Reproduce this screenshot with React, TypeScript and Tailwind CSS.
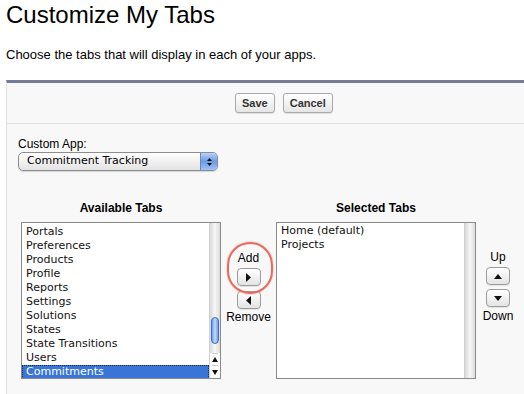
const available = [
  'Opportunities',
  'Portals',
  'Preferences',
  'Products',
  'Profile',
  'Reports',
  'Settings',
  'Solutions',
  'States',
  'State Transitions',
  'Users',
];

const selected = ['Home (default)', 'Projects'];

const lucida = { fontFamily: '"DejaVu Sans", "Liberation Sans", sans-serif' };

function Triangle({ dir }: { dir: 'up' | 'down' | 'left' | 'right' }) {
  const pts = {
    up: '0,6 4,1 8,6',
    down: '0,1 4,6 8,1',
    left: '6,0 1,4.5 6,9',
    right: '1,0 6,4.5 1,9',
  }[dir];
  const vertical = dir === 'up' || dir === 'down';
  return (
    <svg width={vertical ? 8 : 7} height={vertical ? 7 : 9} viewBox={vertical ? '0 0 8 7' : '0 0 7 9'}>
      <polygon points={pts} fill="#111" />
    </svg>
  );
}

function ArrowButton({ dir }: { dir: 'up' | 'down' | 'left' | 'right' }) {
  return (
    <button className="flex h-[18px] w-[24px] items-center justify-center rounded-[4px] border border-[#9c9c9c] bg-gradient-to-b from-white to-[#e4e4e4] shadow-[0_1px_0_rgba(0,0,0,0.08)]">
      <Triangle dir={dir} />
    </button>
  );
}

function GrayButton({ label }: { label: string }) {
  return (
    <button className="h-[20px] rounded-[3px] border border-[#a9a9a9] bg-gradient-to-b from-white to-[#e6e6e6] px-[6px] text-[11px] font-bold leading-[18px] text-[#333] shadow-[0_1px_1px_rgba(0,0,0,0.1)]">
      {label}
    </button>
  );
}

function ScrollTrack({ withThumb }: { withThumb: boolean }) {
  return (
    <div className="flex w-[11px] flex-col border-l border-[#d0d0d0] bg-gradient-to-r from-[#d9d9d9] via-[#f7f7f7] to-[#dcdcdc]">
      <div className="relative flex-1">
        {withThumb && (
          <div className="absolute left-[1px] right-[1px] top-[94px] h-[27px] rounded-full border border-[#3f6fbf] bg-gradient-to-r from-[#6d9ae8] via-[#c2dbff] to-[#6e9be6]" />
        )}
      </div>
      {withThumb && (
        <div className="flex flex-col items-center bg-white">
          <div className="flex h-[12px] items-center justify-center border-t border-[#cfcfcf]">
            <svg width="6" height="5" viewBox="0 0 6 5">
              <polygon points="0,5 3,0 6,5" fill="#111" />
            </svg>
          </div>
          <div className="flex h-[13px] items-center justify-center border-t border-[#cfcfcf]">
            <svg width="6" height="5" viewBox="0 0 6 5">
              <polygon points="0,0 3,5 6,0" fill="#111" />
            </svg>
          </div>
        </div>
      )}
    </div>
  );
}

export default function App() {
  return (
    <div className="h-[394px] w-[524px] overflow-hidden bg-white text-black" style={{ fontFamily: '"Liberation Sans", Arial, sans-serif' }}>
      <h1 className="pl-[6px] pt-[1px] text-[24px] leading-[28px]">Customize My Tabs</h1>
      <p className="mt-[18px] pl-[6px] text-[13px] leading-[15px]">Choose the tabs that will display in each of your apps.</p>

      <div className="ml-[6px] mt-[18px] w-[560px] border-l border-t-[3px] border-l-[#e2e2e2] border-t-[#737c96] bg-[#f8f8f8]">
        <div className="flex h-[41px] items-center gap-[8px] border-b border-[#e2e2e2] pl-[228px]">
          <GrayButton label="Save" />
          <GrayButton label="Cancel" />
        </div>

        <div className="pl-[11px] pt-[13px]">
          <div className="text-[12px] leading-[15px]">Custom App:</div>
          <div className="flex h-[19px] w-[200px] items-stretch overflow-hidden rounded-[5px] border border-[#8d8d8d] bg-gradient-to-b from-white to-[#e3e3e3] shadow-[0_1px_1px_rgba(0,0,0,0.15)]">
            <div className="flex flex-1 items-center pl-[8px] text-[11px]" style={lucida}>
              Commitment Tracking
            </div>
            <div className="flex w-[17px] flex-col items-center justify-center gap-[2px] border-l border-[#6f86b0] bg-gradient-to-b from-[#b8d2f7] via-[#6a9be6] to-[#9fc3f5]">
              <svg width="5" height="3" viewBox="0 0 5 3">
                <polygon points="0,3 2.5,0 5,3" fill="#111" />
              </svg>
              <svg width="5" height="3" viewBox="0 0 5 3">
                <polygon points="0,0 2.5,3 5,0" fill="#111" />
              </svg>
            </div>
          </div>
        </div>

        <div className="flex pl-[14px] pt-[30px]">
          <div className="flex w-[200px] flex-col">
            <div className="mb-[7px] text-center text-[12px] font-bold leading-[14px]">Available Tabs</div>
            <div className="flex h-[157px] border border-[#8a8a8a] bg-white">
              <div className="flex flex-1 flex-col overflow-hidden text-[11px] leading-[14px]" style={lucida}>
                <div className="-mt-[12px]">
                  {available.map((t) => (
                    <div key={t} className="h-[14px] pl-[4px] text-[#111]">
                      {t}
                    </div>
                  ))}
                  <div className="h-[14px] border border-dotted border-[#1a2a55] bg-[#3875d7] pl-[3px] leading-[12px] text-white">
                    Commitments
                  </div>
                </div>
              </div>
              <ScrollTrack withThumb />
            </div>
          </div>

          <div className="relative flex w-[55px] flex-col items-center pt-[50px] text-[12px] leading-[14px]">
            <div>Add</div>
            <div className="mt-[3px]">
              <ArrowButton dir="right" />
            </div>
            <div className="mt-[5px]">
              <ArrowButton dir="left" />
            </div>
            <div className="mt-[1px]">Remove</div>
            <div className="absolute left-[6px] top-[41px] h-[52px] w-[46px] rounded-full border-2 border-[#e66a5e] shadow-[0_0_2px_rgba(230,106,94,0.6)]" />
          </div>

          <div className="flex w-[200px] flex-col">
            <div className="mb-[7px] text-center text-[12px] font-bold leading-[14px]">Selected Tabs</div>
            <div className="flex h-[157px] border border-[#8a8a8a] bg-white">
              <div className="flex-1 pt-[1px] text-[11px] leading-[14px]" style={lucida}>
                {selected.map((t) => (
                  <div key={t} className="pl-[4px] text-[#111]">
                    {t}
                  </div>
                ))}
              </div>
              <ScrollTrack withThumb={false} />
            </div>
          </div>

          <div className="flex w-[44px] flex-col items-center pt-[49px] text-[12px] leading-[14px]">
            <div>Up</div>
            <div className="mt-[3px]">
              <ArrowButton dir="up" />
            </div>
            <div className="mt-[4px]">
              <ArrowButton dir="down" />
            </div>
            <div className="mt-[2px]">Down</div>
          </div>
        </div>
        <div className="h-[40px]" />
      </div>
    </div>
  );
}
